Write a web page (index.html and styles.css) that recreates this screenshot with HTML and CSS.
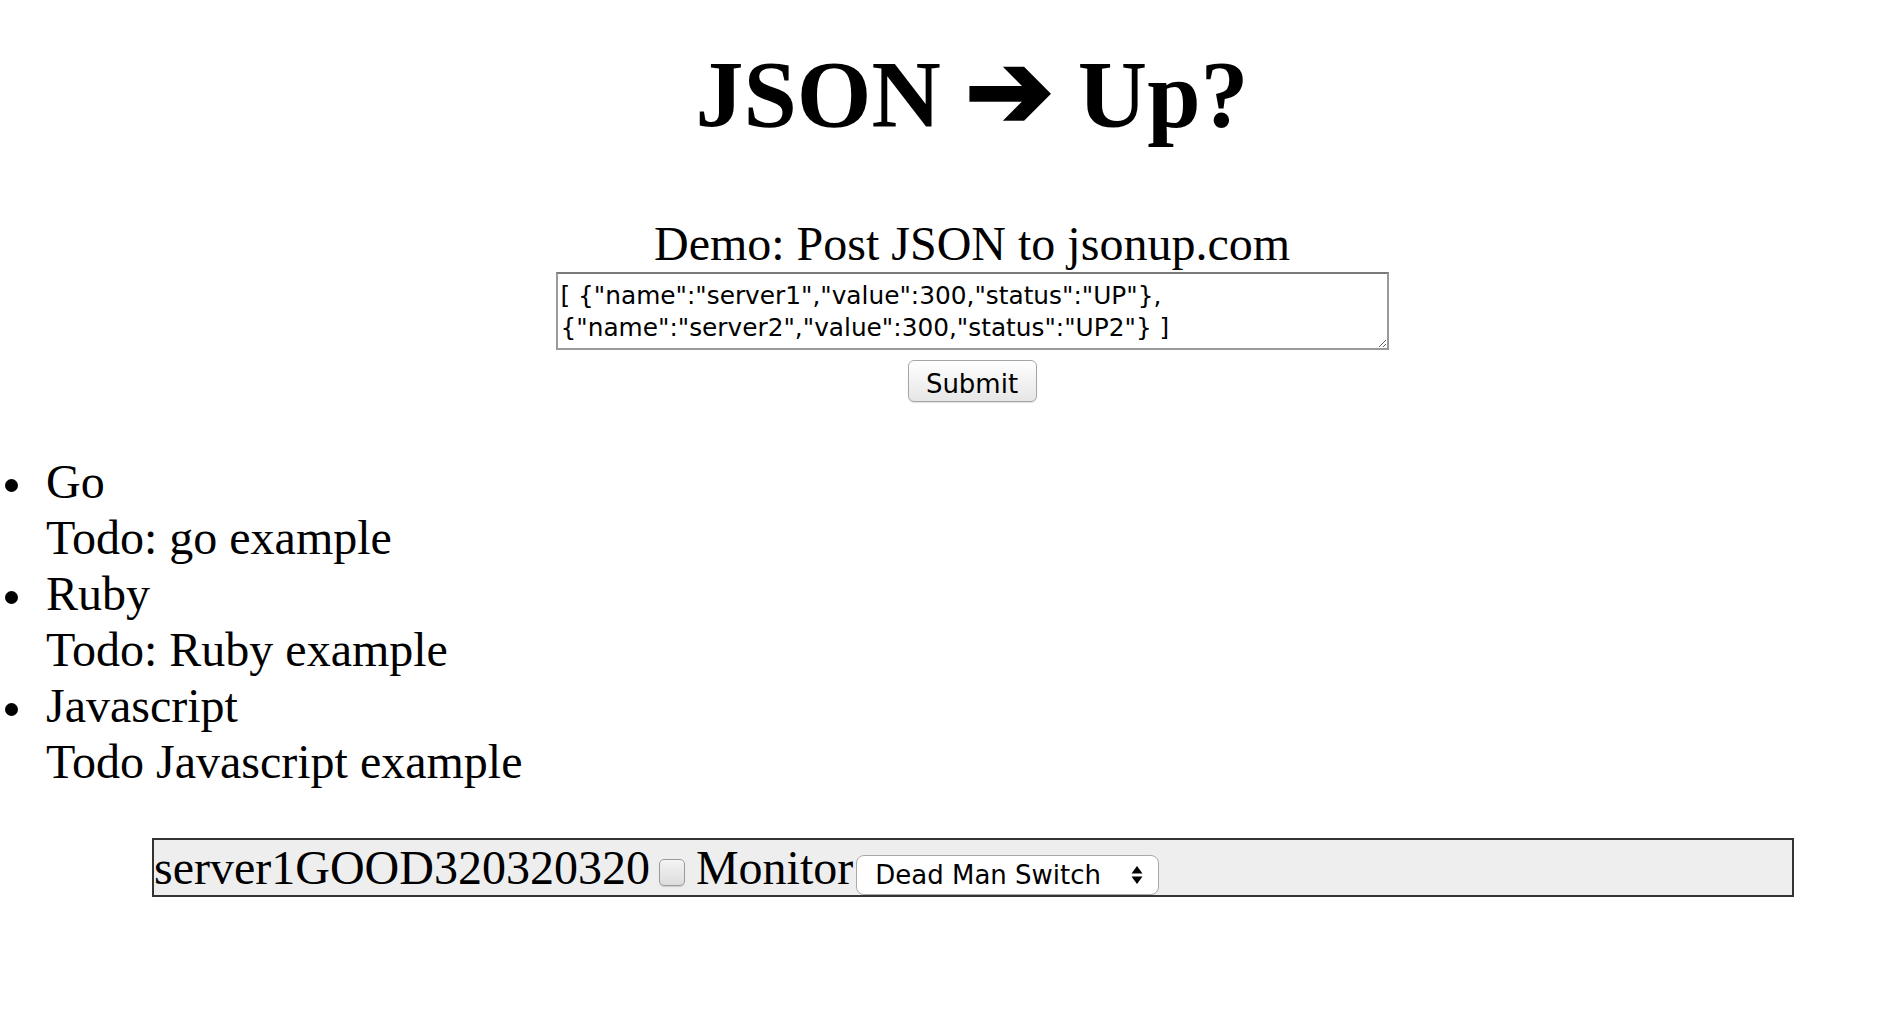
FILE: index.html
```html
<!DOCTYPE html>
<html lang="en">
<head>
<meta charset="utf-8">
<title>JSON ➔ Up?</title>
<link rel="stylesheet" href="styles.css">
</head>
<body>
<div class="page">
  <header class="hero">
    <h1 class="title">JSON <span class="arrow">➔</span> Up?</h1>
    <form class="demo">
      <div class="demo-label">Demo: Post JSON to jsonup.com</div>
      <textarea class="json-input" wrap="off">[ {"name":"server1","value":300,"status":"UP"},
{"name":"server2","value":300,"status":"UP2"} ]</textarea>
      <button type="button" class="submit">Submit</button>
    </form>
  </header>

  <ul class="langs">
    <li class="lang"><div>Go</div><div>Todo: go example</div></li>
    <li class="lang"><div>Ruby</div><div>Todo: Ruby example</div></li>
    <li class="lang"><div>Javascript</div><div>Todo Javascript example</div></li>
  </ul>

  <div class="monitor-wrap">
    <div class="monitor"><span class="srv">server1GOOD320320320</span><input type="checkbox" class="check"><span class="mon-label">Monitor</span><span class="select-wrap"><select class="mode"><option>Dead Man Switch</option></select><svg class="select-arrows" width="12" height="20" viewBox="0 0 12 20"><path d="M6 1 L11.5 8.5 L0.5 8.5 Z" fill="#000"/><path d="M0.5 11.5 L11.5 11.5 L6 19 Z" fill="#000"/></svg></span></div>
  </div>
</div>
</body>
</html>
```

FILE: styles.css
```css
html, body {
  margin: 0;
  padding: 0;
  background: #fff;
}

body {
  font-family: "Liberation Serif", "Times New Roman", serif;
  color: #000;
}

.page {
  padding: 0 8px;
}

.hero {
  padding-left: 58px;
  display: flex;
  flex-direction: column;
  align-items: center;
  text-align: center;
}

.title {
  margin: 40px 0 0;
  height: 110px;
  font-size: 96px;
  line-height: 110px;
  font-weight: bold;
}

.arrow {
  font-size: 1.1em;
  line-height: 0;
}

.demo {
  margin-top: 66px;
  display: flex;
  flex-direction: column;
  align-items: center;
}

.demo-label {
  font-size: 48px;
  line-height: 56px;
}

.json-input {
  display: block;
  box-sizing: border-box;
  width: 833px;
  height: 78px;
  margin: 0;
  padding: 6px 3px 4px;
  border: 2px solid #9a9a9a;
  border-top-color: #7a7a7a;
  font-family: "DejaVu Sans", "Open Sans", sans-serif;
  font-size: 24.8px;
  line-height: 32px;
  color: #000;
  overflow: hidden;
  resize: both;
}

.submit {
  margin-top: 10px;
  box-sizing: border-box;
  width: 129px;
  height: 42px;
  padding: 5px 0 0;
  border: 1px solid #a6a6a6;
  border-radius: 6px;
  background: linear-gradient(#ffffff, #f1f1f1 55%, #e6e6e6);
  box-shadow: 0 1px 1px rgba(0, 0, 0, 0.12);
  font-family: "DejaVu Sans", "Open Sans", sans-serif;
  font-size: 26px;
  line-height: 34px;
  color: #000;
}

.langs {
  margin: 52px 0 0;
  padding-left: 38px;
  font-size: 48px;
  line-height: 56px;
  list-style: none;
}

.lang {
  position: relative;
}

.lang::before {
  content: "";
  position: absolute;
  left: -41px;
  top: 25px;
  width: 13px;
  height: 13px;
  border-radius: 50%;
  background: #000;
}

.monitor-wrap {
  margin-top: 48px;
  padding-left: 60px;
}

.monitor {
  box-sizing: border-box;
  width: 1642px;
  height: 59px;
  margin: 0 auto;
  border: 2px solid #333;
  background: #eeeeee;
  font-size: 48px;
  line-height: 55px;
  white-space: nowrap;
}

.check {
  -webkit-appearance: none;
  appearance: none;
  box-sizing: border-box;
  width: 26px;
  height: 27px;
  margin: 0 0 0 9px;
  vertical-align: -2px;
  border: 1px solid #9b9b9b;
  border-radius: 5px;
  background: linear-gradient(#f4f4f4, #dcdcdc);
  box-shadow: 0 1px 1px rgba(0, 0, 0, 0.15);
}

.mon-label {
  margin-left: 11px;
}

.select-wrap {
  position: relative;
  display: inline-flex;
  margin-left: 3px;
  vertical-align: baseline;
}

.mode {
  -webkit-appearance: none;
  appearance: none;
  box-sizing: border-box;
  width: 303px;
  height: 40px;
  margin: 0;
  padding: 0 0 0 18px;
  border: 1px solid #a9a9a9;
  border-radius: 8px;
  background: #fff;
  font-family: "DejaVu Sans", "Open Sans", sans-serif;
  font-size: 26px;
  color: #000;
}

.select-arrows {
  position: absolute;
  right: 16px;
  top: 10px;
  pointer-events: none;
}
```
